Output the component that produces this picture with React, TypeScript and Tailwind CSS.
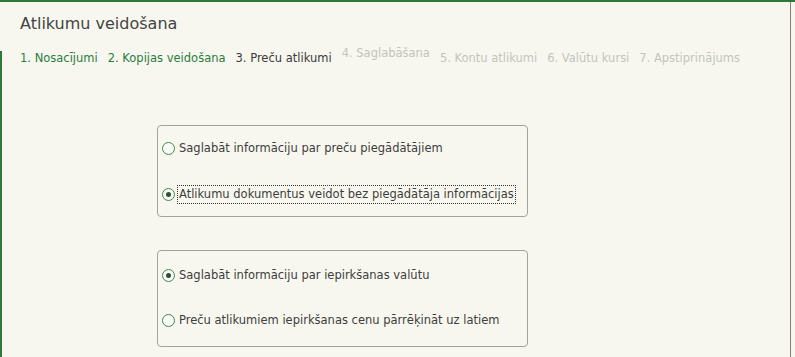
import { FC } from 'react';

interface Step {
  label: string;
  state: 'done' | 'current' | 'todo';
  raised?: boolean;
}

const steps: Step[] = [
  { label: '1. Nosacījumi', state: 'done' },
  { label: '2. Kopijas veidošana', state: 'done' },
  { label: '3. Preču atlikumi', state: 'current' },
  { label: '4. Saglabāšana', state: 'todo', raised: true },
  { label: '5. Kontu atlikumi', state: 'todo' },
  { label: '6. Valūtu kursi', state: 'todo' },
  { label: '7. Apstiprinājums', state: 'todo' },
];

const Radio: FC<{ checked?: boolean; label: string; focused?: boolean }> = ({
  checked,
  label,
  focused,
}) => (
  <label className="flex items-center h-[20px] whitespace-nowrap">
    <span className="w-[13px] h-[13px] rounded-full border border-[#3d8a4e] bg-[#fbfbf6] flex items-center justify-center shrink-0">
      {checked && <span className="w-[5px] h-[5px] rounded-full bg-[#2f4f36]" />}
    </span>
    <span
      className={
        focused
          ? 'ml-[2px] px-[1px] border border-dotted border-[#333] leading-[17px]'
          : 'ml-[4px] leading-[17px]'
      }
    >
      {label}
    </span>
  </label>
);

const App: FC = () => {
  return (
    <div
      className="w-[795px] h-[357px] overflow-hidden bg-[#f7f7ef] border-t-2 border-[#2c7a3a] flex text-[#3d3d3d]"
      style={{ fontFamily: 'Tahoma, "DejaVu Sans", Verdana, sans-serif' }}
    >
      <div className="w-[791px] border-r border-[#8c7d72] flex flex-col">
        <div className="h-[49px] pl-[20px] pt-[11px]">
          <h1 className="text-[16px] leading-[22px] text-[#444]">Atlikumu veidošana</h1>
        </div>
        <div className="flex-1 border-l-2 border-[#2c7a3a] pl-[18px]">
          <div className="flex gap-[10px] text-[11.5px] leading-[14px] whitespace-nowrap">
            {steps.map((s) => (
              <span
                key={s.label}
                className={
                  s.state === 'done'
                    ? 'text-[#2b7d3f]'
                    : s.state === 'current'
                      ? 'text-[#3a3a3a]'
                      : s.raised
                        ? 'text-[#c4c4bc] -mt-[5px]'
                        : 'text-[#c4c4bc]'
                }
              >
                {s.label}
              </span>
            ))}
          </div>

          <div className="ml-[137px] mt-[60px] w-[371px] text-[11.5px]">
            <div className="h-[92px] border border-[#a3a39c] rounded-[4px] pl-[4px] pt-[12px] flex flex-col gap-[26px]">
              <Radio label="Saglabāt informāciju par preču piegādātājiem" />
              <Radio
                label="Atlikumu dokumentus veidot bez piegādātāja informācijas"
                checked
                focused
              />
            </div>
            <div className="mt-[33px] h-[97px] border border-[#a3a39c] rounded-[4px] pl-[4px] pt-[14px] flex flex-col gap-[25px]">
              <Radio label="Saglabāt informāciju par iepirkšanas valūtu" checked />
              <Radio label="Preču atlikumiem iepirkšanas cenu pārrēķināt uz latiem" />
            </div>
          </div>
        </div>
      </div>
    </div>
  );
};

export default App;
